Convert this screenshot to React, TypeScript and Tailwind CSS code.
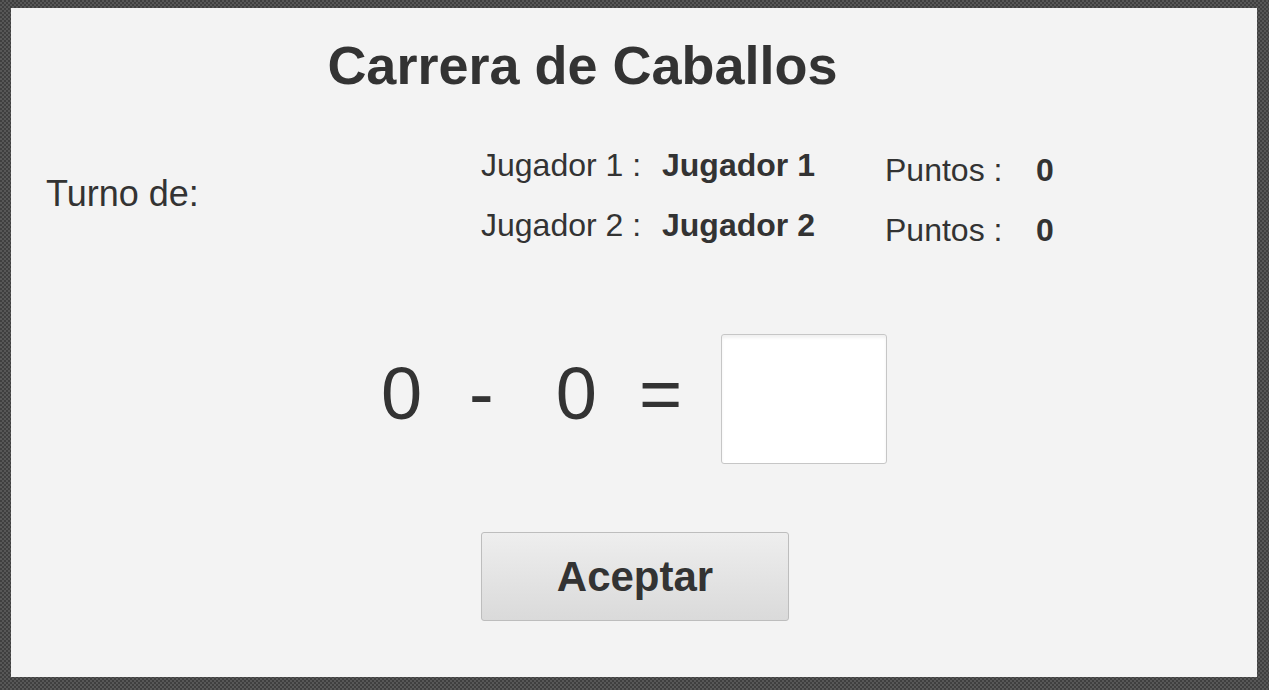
import { useState } from "react";

const jugadores = [
    { label: "Jugador 1 :", nombre: "Jugador 1", puntos: 0 },
    { label: "Jugador 2 :", nombre: "Jugador 2", puntos: 0 },
];

const App = () => {
    const [respuesta, setRespuesta] = useState("");

    return (
        <div
            className="w-[1269px] h-[690px] pt-[8px] pl-[11px] bg-[#4a4a4a] bg-[repeating-conic-gradient(#575757_0_25%,#3f3f3f_0_50%)] bg-[length:4px_4px] text-[#333] font-['Liberation_Sans',Arial,sans-serif]"
        >
            <div className="w-[1246px] h-[669px] bg-[#f3f3f3] flex flex-col">

                {/* Título */}
                <h1 className="mt-[30px] pr-[103px] text-center text-[54px] leading-none font-bold">
                    Carrera de Caballos
                </h1>

                {/* Turno y jugadores */}
                <div className="mt-[57px] flex items-start">
                    <div className="w-[470px] pl-[35px] mt-[27px] text-[36px] leading-none">
                        Turno de:
                    </div>
                    <div className="flex flex-col">
                        {jugadores.map((j) => (
                            <div key={j.nombre} className="h-[60px] flex items-start text-[32px] leading-none">
                                <span className="w-[181px]">{j.label}</span>
                                <span className="w-[223px] font-bold">{j.nombre}</span>
                                <span className="w-[151px] pt-[5px]">Puntos :</span>
                                <span className="pt-[5px] font-bold">{j.puntos}</span>
                            </div>
                        ))}
                    </div>
                </div>

                {/* Operación */}
                <div className="mt-[65px] flex justify-center items-start text-[74px] leading-none">
                    <span className="mt-[23px]">0</span>
                    <span className="mt-[23px] ml-[47px]">-</span>
                    <span className="mt-[23px] ml-[62px]">0</span>
                    <span className="mt-[23px] ml-[42px]">=</span>
                    <input
                        type="text"
                        value={respuesta}
                        onChange={(e) => setRespuesta(e.target.value)}
                        className="ml-[39px] w-[166px] h-[130px] bg-white border border-[#c6c6c6] rounded-[3px] shadow-[inset_0_3px_3px_rgba(0,0,0,0.06)] text-[40px] text-center outline-none"
                    />
                </div>

                {/* Botón */}
                <div className="mt-[68px] pl-[2px] flex justify-center">
                    <button className="w-[308px] h-[89px] flex items-center justify-center bg-gradient-to-b from-[#eeeeee] to-[#dadada] border border-[#bdbdbd] rounded-[3px] text-[42px] leading-none font-bold text-[#333]">
                        Aceptar
                    </button>
                </div>

            </div>
        </div>
    );
};

export default App;
